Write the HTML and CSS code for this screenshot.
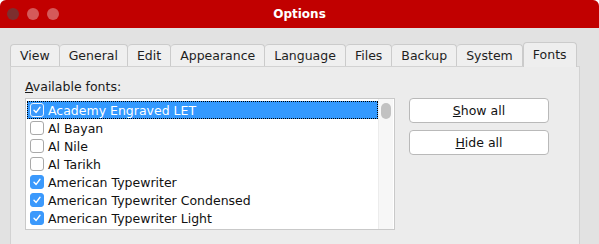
FILE: index.html
```html
<!DOCTYPE html>
<html>
<head>
<meta charset="utf-8">
<link rel="stylesheet" href="styles.css">
</head>
<body>
<div class="window">
  <div class="titlebar">
    <div class="lights">
      <span class="light close"></span>
      <span class="light"></span>
      <span class="light"></span>
    </div>
    <div class="title">Options</div>
  </div>
  <div class="content">
    <div class="tabs">
      <div class="tab">View</div>
      <div class="tab">General</div>
      <div class="tab">Edit</div>
      <div class="tab">Appearance</div>
      <div class="tab">Language</div>
      <div class="tab">Files</div>
      <div class="tab">Backup</div>
      <div class="tab">System</div>
      <div class="tab active">Fonts</div>
    </div>
    <div class="panel">
      <div class="label"><u>A</u>vailable fonts:</div>
      <div class="row">
        <div class="list">
          <div class="items">
            <div class="item selected"><span class="cb on"><svg viewBox="0 0 14 14"><path d="M3.5 7.2 L6 9.8 L10.5 3.8" fill="none" stroke="#fff" stroke-width="1.6" stroke-linecap="round" stroke-linejoin="round"/></svg></span>Academy Engraved LET</div>
            <div class="item"><span class="cb"></span>Al Bayan</div>
            <div class="item"><span class="cb"></span>Al Nile</div>
            <div class="item"><span class="cb"></span>Al Tarikh</div>
            <div class="item"><span class="cb on"><svg viewBox="0 0 14 14"><path d="M3.5 7.2 L6 9.8 L10.5 3.8" fill="none" stroke="#fff" stroke-width="1.6" stroke-linecap="round" stroke-linejoin="round"/></svg></span>American Typewriter</div>
            <div class="item"><span class="cb on"><svg viewBox="0 0 14 14"><path d="M3.5 7.2 L6 9.8 L10.5 3.8" fill="none" stroke="#fff" stroke-width="1.6" stroke-linecap="round" stroke-linejoin="round"/></svg></span>American Typewriter Condensed</div>
            <div class="item"><span class="cb on"><svg viewBox="0 0 14 14"><path d="M3.5 7.2 L6 9.8 L10.5 3.8" fill="none" stroke="#fff" stroke-width="1.6" stroke-linecap="round" stroke-linejoin="round"/></svg></span>American Typewriter Light</div>
          </div>
          <div class="scrollbar"><div class="thumb"></div></div>
        </div>
        <div class="buttons">
          <button class="btn"><u>S</u>how all</button>
          <button class="btn"><u>H</u>ide all</button>
        </div>
      </div>
    </div>
  </div>
</div>
</body>
</html>
```

FILE: styles.css
```css
* { box-sizing: border-box; }
html, body { margin: 0; padding: 0; background: #ffffff; }
body { width: 599px; height: 244px; overflow: hidden; font-family: "DejaVu Sans", "Liberation Sans", sans-serif; font-size: 12px; color: #1a1a1a; }
.window { width: 599px; height: 244px; background: #e2e2e2; border-radius: 6px 6px 0 0; overflow: hidden; display: flex; flex-direction: column; }
.titlebar { height: 28px; background: #c10000; display: flex; align-items: center; position: relative; flex: none; }
.lights { display: flex; gap: 8px; padding-left: 7px; }
.light { width: 12px; height: 12px; border-radius: 50%; background: #d45a5a; }
.light.close { background: #7c2f2f; }
.title { position: absolute; left: 0; right: 0; text-align: center; color: #fff; font-weight: bold; font-size: 12px; top: 7px; }
.content { padding: 14px 19px 0 10px; flex: 1; display: flex; flex-direction: column; }
.tabs { display: flex; align-items: flex-end; height: 24px; flex: none; position: relative; z-index: 1; }
.tab { height: 22px; padding: 0 9px; border: 1px solid #cbcbcb; border-bottom: none; border-left: none; border-radius: 4px 4px 0 0; background: #efefef; display: flex; align-items: center; justify-content: center; font-size: 12.5px; color: #1e1e1e; }
.tab:first-child { border-left: 1px solid #cbcbcb; }
.tab.active { height: 25px; margin-bottom: -1px; background: #eeeeee; border-left: 1px solid #cbcbcb; padding-bottom: 2px; }
.panel { flex: 1; background: #ececec; border: 1px solid #d2d2d2; border-bottom: none; padding: 12px 14px 0 14px; }
.label { font-size: 12.5px; height: 19px; line-height: 16px; }
.row { display: flex; gap: 14px; }
.list { width: 370px; height: 132px; background: #fff; border: 1px solid #c9c9c9; display: flex; padding: 2px 1px 0 1px; }
.items { flex: 1; }
.item { height: 18px; display: flex; align-items: center; gap: 4px; padding-left: 3px; font-size: 12.5px; color: #111; }
.item.selected { background: #3399ff; color: #fff; outline: 1px dotted #000; outline-offset: -1px; }
.cb { width: 14px; height: 14px; border-radius: 3px; border: 1px solid #a9a9a9; background: #fff; display: flex; flex: none; }
.cb.on { background: #3b99fc; border-color: #3b99fc; }
.item.selected .cb.on { border-color: #e8f2ff; }
.cb svg { width: 12px; height: 12px; }
.scrollbar { width: 15px; background: #f7f7f7; border-left: 1px solid #ececec; margin-top: -2px; padding: 4px 2px; }
.thumb { width: 10px; height: 16px; border-radius: 5px; background: #c2c2c2; }
.buttons { display: flex; flex-direction: column; gap: 7px; }
.btn { width: 140px; height: 25px; background: #fff; border: 1px solid #b9b9b9; border-radius: 4px; font-family: inherit; font-size: 12.5px; color: #111; padding: 0; }
```
